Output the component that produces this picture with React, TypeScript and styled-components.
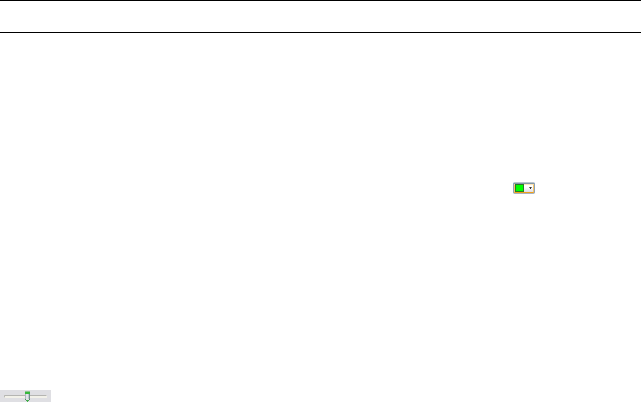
import { useState, FunctionComponent } from 'react';
import styled, { createGlobalStyle } from 'styled-components';

const GlobalStyle = createGlobalStyle`
	* {
		box-sizing: border-box;
	}

	body {
		margin: 0;
		background: #fff;
		font-family: 'Liberation Sans', sans-serif;
	}
`;

const Page = styled.div`
	display: flex;
	flex-direction: column;
	height: 402px;
	overflow: hidden;
`;

const Header = styled.header`
	flex: none;
	height: 33px;
	border-top: 1px solid #000;
	border-bottom: 1px solid #000;
`;

const Content = styled.main`
	flex: 1;
	display: flex;
	justify-content: flex-end;
	align-items: flex-start;
	padding: 149px 106px 0 0;
`;

const Picker = styled.button`
	display: flex;
	width: 22px;
	height: 12px;
	padding: 1px 0 0;
	border: 1px solid #8ba2b8;
	border-top-color: #bcc5cc;
	border-bottom-color: #a9b3bc;
	border-radius: 2px;
	background: #8297a8;
	overflow: hidden;
`;

const PickerFace = styled.span`
	flex: 1;
	display: flex;
	align-items: flex-start;
	height: 9px;
	border: 1px solid #f8c566;
	border-top-color: #fde5b8;
	border-bottom-color: #f0a01c;
	background: linear-gradient(#fff 30%, #dcdce8);
`;

const Swatch = styled.span<{ $color: string }>`
	width: 9px;
	height: 8px;
	margin-top: -1px;
	border: 1px solid #287828;
	background: ${props => props.$color};
`;

const Arrow = styled.svg`
	width: 3px;
	height: 2px;
	margin: 2px 0 0 5px;
`;

const Footer = styled.footer`
	flex: none;
	display: flex;
	height: 12px;
`;

const SliderPanel = styled.div`
	position: relative;
	width: 51px;
	height: 12px;
	padding: 5px 4px 0;
	background: #dfdfe3;
`;

const Track = styled.div`
	height: 3px;
	border: 1px solid #f2f1e9;
	border-top-color: #b5b5b2;
	border-left-color: #b9b9b6;
	border-radius: 1px;
	background: #f2f1e9;
`;

const Thumb = styled.svg`
	position: absolute;
	top: 1px;
	width: 5px;
	height: 11px;
`;

const ColorPicker: FunctionComponent = () => {
	const [color] = useState('#00ff00');

	return (
		<Picker type="button">
			<PickerFace>
				<Swatch $color={color} />
				<Arrow viewBox="0 0 3 2" shapeRendering="crispEdges">
					<path d="M0 0h3v1H0z" fill="#777" />
					<path d="M1 0h1v2H1z" fill="#333" />
				</Arrow>
			</PickerFace>
		</Picker>
	);
};

const Slider: FunctionComponent<{ value: number }> = props => {
	const { value } = props;

	return (
		<SliderPanel>
			<Track />
			<Thumb viewBox="0 0 5 11" style={{ left: value }} shapeRendering="crispEdges">
				<path d="M0 1h5v7H4v1H3v1H2V9H1V8H0z" fill="#e0e3e8" />
				<path d="M0 3h1v5H0z" fill="#abb8bd" />
				<path d="M3 3h1v5H3z" fill="#c0c7cc" />
				<path d="M4 3h1v5H4z" fill="#738c90" />
				<path d="M0 0h5v1H0z" fill="#8bc58d" />
				<path d="M0 1h5v2H0z" fill="#35b83b" />
				<path d="M0 8h1v1h1v1H1V9H0zM4 8h1v1H4v1H3V9h1z" fill="#499657" />
				<path d="M2 9h1v2H2z" fill="#43b84a" />
			</Thumb>
		</SliderPanel>
	);
};

const App: FunctionComponent = () => (
	<>
		<GlobalStyle />
		<Page>
			<Header />
			<Content>
				<ColorPicker />
			</Content>
			<Footer>
				<Slider value={25} />
			</Footer>
		</Page>
	</>
);

export default App;
